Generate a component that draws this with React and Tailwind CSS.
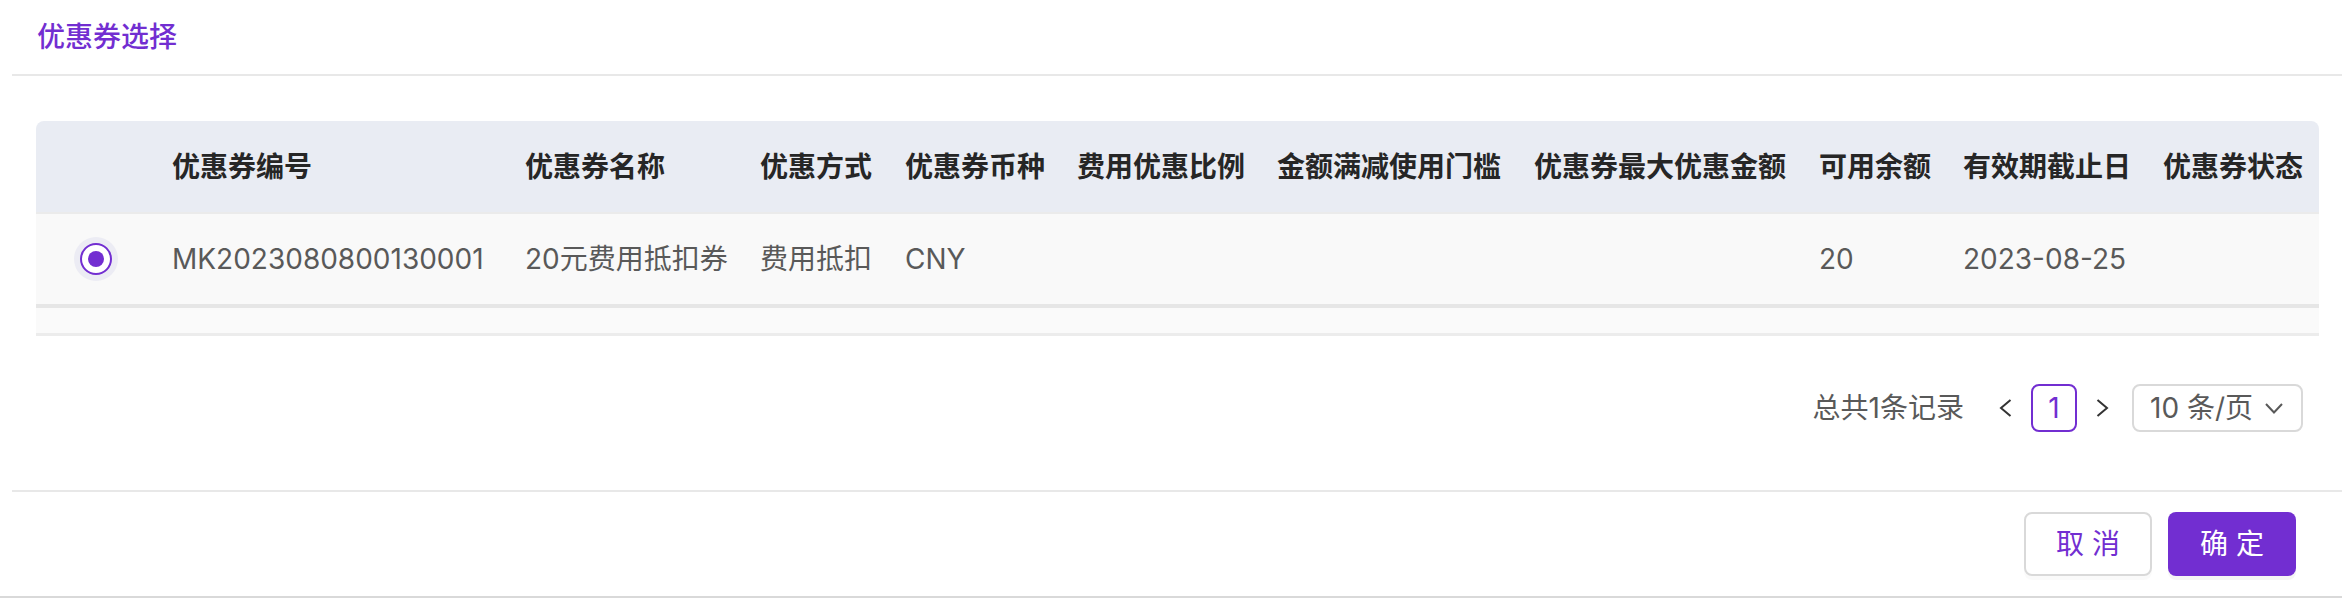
import React, { useState } from 'react'

const columns = [
    '优惠券编号',
    '优惠券名称',
    '优惠方式',
    '优惠券币种',
    '费用优惠比例',
    '金额满减使用门槛',
    '优惠券最大优惠金额',
    '可用余额',
    '有效期截止日',
    '优惠券状态',
]

const rows = [
    {
        id: 'MK2023080800130001',
        values: ['MK2023080800130001', '20元费用抵扣券', '费用抵扣', 'CNY', '', '', '', '20', '2023-08-25', ''],
    },
]

// column widths measured off the design
const gridCols = 'grid grid-cols-[120px_353px_235px_145px_172px_200px_257px_285px_144px_200px_172px]'

const Radio = ({ checked, onClick }) => (
    <div className='w-[44px] h-[44px] rounded-full bg-[#ececf4] flex items-center justify-center cursor-pointer' onClick={onClick}>
        <div className='w-[32px] h-[32px] rounded-full border-[2.5px] border-[#722ed1] bg-white flex items-center justify-center'>
            {checked && <div className='w-[16px] h-[16px] rounded-full bg-[#722ed1]' />}
        </div>
    </div>
)

const App = () => {
    const [selected, setSelected] = useState('MK2023080800130001')

    return (
        <div className="w-[2342px] h-[604px] bg-white flex flex-col font-['Inter','Noto_Sans_CJK_SC',sans-serif] overflow-hidden">
            <div className='h-[74px] flex items-center pl-[37px] text-[28px] font-medium text-[#722ed1]'>
                优惠券选择
            </div>
            <div className='ml-[12px] h-[2px] bg-[#e8e8e8]' />

            {/* table */}
            <div className='mt-[45px] ml-[36px] w-[2283px]'>
                <div className={`${gridCols} h-[93px] items-center bg-[#e9ecf3] rounded-t-[8px] border-b-2 border-[#ebebeb] text-[28px] font-semibold text-[#262626]`}>
                    <div />
                    {columns.map((c) => (
                        <div key={c} className='px-[16px] whitespace-nowrap'>{c}</div>
                    ))}
                </div>
                {rows.map((r) => (
                    <div key={r.id} className={`${gridCols} h-[94px] items-center bg-[#f9f9f9] border-b-4 border-[#e6e6e6] text-[28px] text-[#595959]`}>
                        <div className='flex justify-center'>
                            <Radio checked={selected === r.id} onClick={() => setSelected(r.id)} />
                        </div>
                        {r.values.map((v, i) => (
                            <div key={i} className='px-[16px] whitespace-nowrap'>{v}</div>
                        ))}
                    </div>
                ))}
                <div className='h-[28px] bg-[#fafafa] border-b-[3px] border-[#ececec]' />
            </div>

            {/* pagination */}
            <div className='mt-[48px] h-[48px] flex items-center justify-end pr-[39px] text-[28px] text-[#595959]'>
                <span>总共1条记录</span>
                <svg className='ml-[35px]' width='13' height='18' viewBox='0 0 13 18' fill='none'>
                    <polyline points='11.5,1 2,9 11.5,17' stroke='#333' strokeWidth='2' />
                </svg>
                <div className='ml-[19px] w-[46px] h-[48px] rounded-[8px] border-2 border-[#722ed1] flex items-center justify-center text-[#722ed1]'>
                    1
                </div>
                <svg className='ml-[19px]' width='13' height='18' viewBox='0 0 13 18' fill='none'>
                    <polyline points='1.5,1 11,9 1.5,17' stroke='#333' strokeWidth='2' />
                </svg>
                <div className='ml-[23px] w-[171px] h-[48px] rounded-[8px] border-2 border-[#d9d9d9] flex items-center justify-between pl-[16px] pr-[18px]'>
                    <span>10 条/页</span>
                    <svg width='18' height='11' viewBox='0 0 18 11' fill='none'>
                        <polyline points='1,1 9,9.5 17,1' stroke='#595959' strokeWidth='2' />
                    </svg>
                </div>
            </div>

            <div className='mt-[58px] ml-[12px] h-[2px] bg-[#e8e8e8]' />

            {/* footer buttons */}
            <div className='mt-[20px] flex justify-end gap-[16px] pr-[46px]'>
                <button type='button' className='w-[128px] h-[64px] rounded-[8px] border-2 border-[#d9d9d9] bg-white text-[28px] text-[#722ed1] shadow-[0_4px_0_rgba(0,0,0,0.02)]'>
                    取 消
                </button>
                <button type='button' className='w-[128px] h-[64px] rounded-[8px] bg-[#722ed1] text-[28px] text-white shadow-[0_4px_0_rgba(0,0,0,0.04)]'>
                    确 定
                </button>
            </div>

            <div className='mt-[20px] h-[2px] bg-[#d9d9d9]' />
        </div>
    )
}

export default App
